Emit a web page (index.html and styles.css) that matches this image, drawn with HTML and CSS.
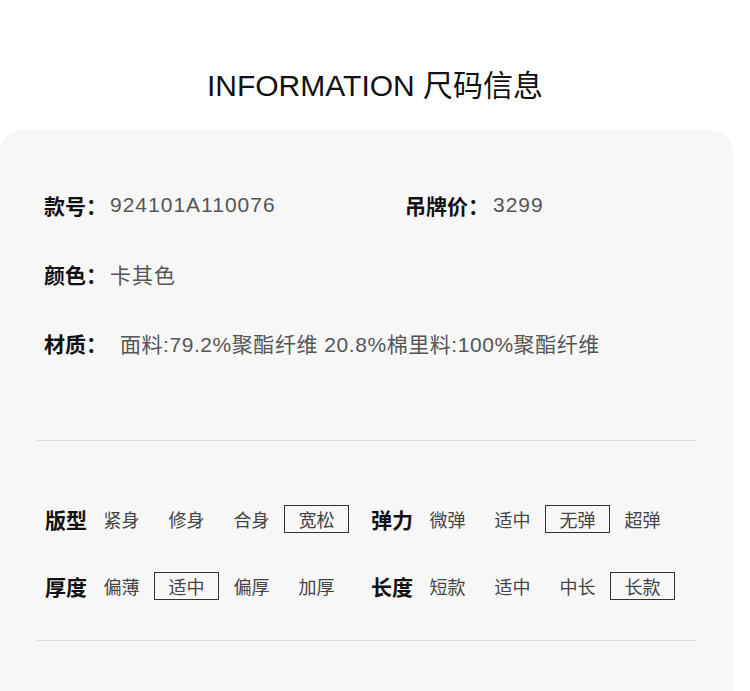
FILE: index.html
```html
<!DOCTYPE html>
<html lang="zh">
<head>
<meta charset="utf-8">
<link rel="stylesheet" href="styles.css">
</head>
<body>
<header class="head">
  <h1 class="title">INFORMATION 尺码信息</h1>
</header>
<section class="card">
  <div class="info">
    <div class="item"><span class="lbl">款号：</span><span class="val">924101A110076</span></div>
    <div class="item"><span class="lbl">吊牌价：</span><span class="val">3299</span></div>
    <div class="item"><span class="lbl">颜色：</span><span class="val">卡其色</span></div>
    <div class="item"></div>
    <div class="item wide"><span class="lbl">材质：</span><span class="val mat">面料:79.2%聚酯纤维 20.8%棉里料:100%聚酯纤维</span></div>
  </div>
  <div class="rule rule-a"></div>
  <div class="attrs">
    <div class="group">
      <span class="alabel">版型</span>
      <span class="opt">紧身</span><span class="opt">修身</span><span class="opt">合身</span><span class="opt on">宽松</span>
    </div>
    <div class="group">
      <span class="alabel">弹力</span>
      <span class="opt">微弹</span><span class="opt">适中</span><span class="opt on">无弹</span><span class="opt">超弹</span>
    </div>
    <div class="group">
      <span class="alabel">厚度</span>
      <span class="opt">偏薄</span><span class="opt on">适中</span><span class="opt">偏厚</span><span class="opt">加厚</span>
    </div>
    <div class="group">
      <span class="alabel">长度</span>
      <span class="opt">短款</span><span class="opt">适中</span><span class="opt">中长</span><span class="opt on">长款</span>
    </div>
  </div>
  <div class="rule rule-b"></div>
</section>
</body>
</html>
```
FILE: styles.css
```css
html, body {
  margin: 0;
  padding: 0;
  background: #ffffff;
  font-family: "Liberation Sans", "Noto Sans CJK SC", sans-serif;
  overflow: hidden;
  height: 691px;
}
.head {
  height: 130px;
  display: flex;
  justify-content: center;
}
.title {
  margin: 67px 0 0 0;
  font-size: 30px;
  line-height: 38px;
  font-weight: 400;
  color: #111;
}
.card {
  width: 733px;
  background: #f7f7f7;
  border-radius: 22px 22px 0 0;
  padding-top: 55px;
  height: 561px;
  box-sizing: border-box;
}
.info {
  display: grid;
  grid-template-columns: 361px 1fr;
  row-gap: 29px;
  padding-left: 44px;
}
.item {
  height: 40px;
  display: flex;
  align-items: center;
}
.wide { grid-column: 1 / 3; }
.lbl {
  font-size: 21px;
  font-weight: 700;
  color: #111;
  width: 66px;
}
.item:nth-child(2) .lbl { width: 88px; }
.val {
  font-size: 21px;
  color: #555;
  letter-spacing: 1px;
}
.mat {
  margin-left: 10px;
  letter-spacing: 0.55px;
}
.rule {
  margin: 0 38px 0 37px;
  border-top: 1px dotted #c4c4c4;
}
.rule-a { margin-top: 77px; }
.attrs {
  display: grid;
  grid-template-columns: 326px 1fr;
  row-gap: 33px;
  padding-left: 45px;
  margin-top: 61px;
}
.group {
  display: flex;
  align-items: center;
  height: 34px;
}
.alabel {
  width: 44px;
  font-size: 21px;
  font-weight: 700;
  color: #111;
}
.opt {
  width: 65px;
  height: 28px;
  box-sizing: border-box;
  display: flex;
  align-items: center;
  justify-content: center;
  font-size: 18px;
  color: #444;
}
.opt:first-of-type { margin-left: -1px; }
.opt.on {
  border: 1px solid #333;
}
.rule-b { margin-top: 37px; }
```
